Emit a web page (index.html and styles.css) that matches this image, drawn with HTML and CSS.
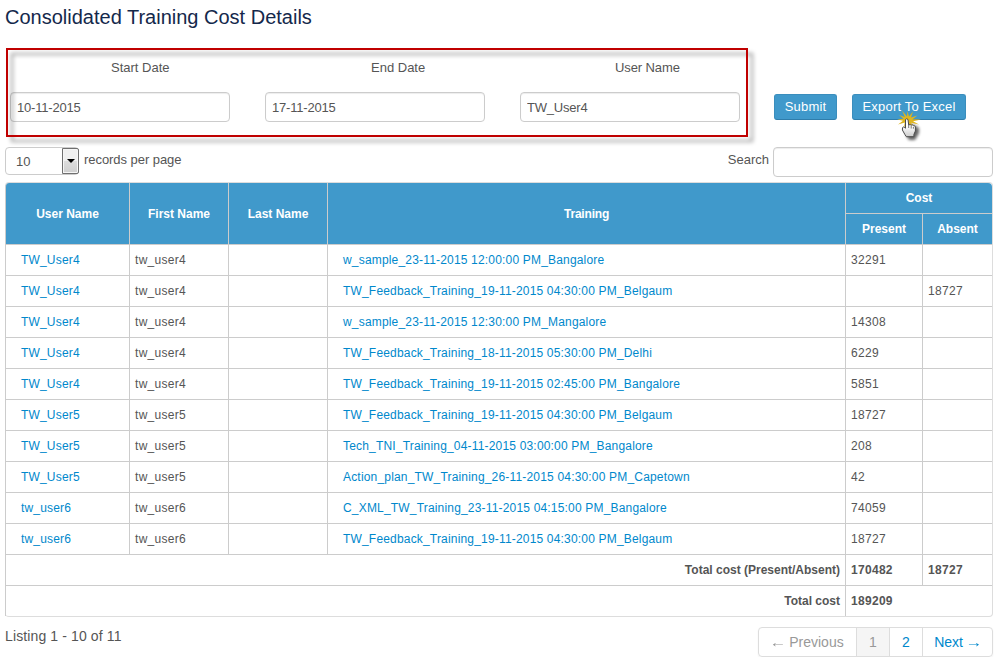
FILE: index.html
```
<!DOCTYPE html>
<html lang="en">
<head>
<meta charset="utf-8">
<title>Consolidated Training Cost Details</title>
<link rel="stylesheet" href="styles.css">
</head>
<body>
<main class="page">
  <h1 class="title">Consolidated Training Cost Details</h1>

  <form class="filters">
    <div class="fields">
      <div class="field"><label class="label start" for="start">Start Date</label><input class="input" id="start" value="10-11-2015"></div>
      <div class="field"><label class="label end" for="end">End Date</label><input class="input" id="end" value="17-11-2015"></div>
      <div class="field"><label class="label user" for="user">User Name</label><input class="input" id="user" value="TW_User4"></div>
      <div class="frame"></div>
    </div>
    <button class="btn submit" type="button">Submit</button>
    <button class="btn export" type="button">Export To Excel
      <svg class="cursor" viewBox="0 0 40 36" width="40" height="36">
        <defs>
          <linearGradient id="hand" x1="0" y1="0" x2="0" y2="1"><stop offset=".4" stop-color="#fff"/><stop offset="1" stop-color="#ccc"/></linearGradient>
          <filter id="soft" x="-50%" y="-50%" width="200%" height="200%"><feGaussianBlur stdDeviation="1.7"/></filter>
        </defs>
        <path d="M14 14l5 2 5 3v5l-4 7h-6l-3-5z" fill="#000" opacity=".6" filter="url(#soft)"/>
        <path d="M12 7.500L12.500 2 14 7.500 18 2.500 16 8.500 22.500 6.500 17.500 10.200 26 10.500 18 12.300 24 15.500 16 13.800 19 18.500 13 14 9 18 9.800 13.500 3 15.500 8 11.800 2 10.500 8.500 9.800 4 6 9.800 8 7 1.500z" fill="#dfb51f"/>
        <path d="M10.500 10.500q1.300-1.500 2.500 0l.7 5.500q1.300-1 2.500.2 1.200-.8 2.300.5 1.500-.4 1.900 1.200v4.100l-1.500 3.500v2.200h-7.500l-1.500-2.200-2.500-4.500q-.5-3.200 1.500-3.200l1.600 1.400z" fill="url(#hand)" stroke="#4a4a4a" stroke-width="1"/>
        <path d="M13.700 16v3M16.200 17v2.500M18.400 18v1.700" fill="none" stroke="#555" stroke-width=".8"/>
      </svg>
    </button>
  </form>

  <div class="tools">
    <div class="length">
      <div class="select"><span>10</span><span class="arrow"><svg width="8" height="4" viewBox="0 0 8 4"><path d="M0 0h8L4 4z"/></svg></span></div>
      <span class="per-page">records per page</span>
    </div>
    <label class="search"><span class="search-text">Search</span><input class="input"></label>
  </div>

  <table class="table">
    <colgroup><col class="c1"><col class="c2"><col class="c2"><col class="c4"><col class="c5"><col class="c6"></colgroup>
    <thead>
      <tr><th rowspan="2">User Name</th><th rowspan="2">First Name</th><th rowspan="2">Last Name</th><th class="training" rowspan="2">Training</th><th colspan="2">Cost</th></tr>
      <tr><th class="sub">Present</th><th class="sub">Absent</th></tr>
    </thead>
    <tbody>
      <tr><td><a>TW_User4</a></td><td>tw_user4</td><td></td><td><a>w_sample_23-11-2015 12:00:00 PM_Bangalore</a></td><td>32291</td><td></td></tr>
      <tr><td><a>TW_User4</a></td><td>tw_user4</td><td></td><td><a>TW_Feedback_Training_19-11-2015 04:30:00 PM_Belgaum</a></td><td></td><td>18727</td></tr>
      <tr><td><a>TW_User4</a></td><td>tw_user4</td><td></td><td><a>w_sample_23-11-2015 12:30:00 PM_Mangalore</a></td><td>14308</td><td></td></tr>
      <tr><td><a>TW_User4</a></td><td>tw_user4</td><td></td><td><a>TW_Feedback_Training_18-11-2015 05:30:00 PM_Delhi</a></td><td>6229</td><td></td></tr>
      <tr><td><a>TW_User4</a></td><td>tw_user4</td><td></td><td><a>TW_Feedback_Training_19-11-2015 02:45:00 PM_Bangalore</a></td><td>5851</td><td></td></tr>
      <tr><td><a>TW_User5</a></td><td>tw_user5</td><td></td><td><a>TW_Feedback_Training_19-11-2015 04:30:00 PM_Belgaum</a></td><td>18727</td><td></td></tr>
      <tr><td><a>TW_User5</a></td><td>tw_user5</td><td></td><td><a>Tech_TNI_Training_04-11-2015 03:00:00 PM_Bangalore</a></td><td>208</td><td></td></tr>
      <tr><td><a>TW_User5</a></td><td>tw_user5</td><td></td><td><a>Action_plan_TW_Training_26-11-2015 04:30:00 PM_Capetown</a></td><td>42</td><td></td></tr>
      <tr><td><a>tw_user6</a></td><td>tw_user6</td><td></td><td><a>C_XML_TW_Training_23-11-2015 04:15:00 PM_Bangalore</a></td><td>74059</td><td></td></tr>
      <tr><td><a>tw_user6</a></td><td>tw_user6</td><td></td><td><a>TW_Feedback_Training_19-11-2015 04:30:00 PM_Belgaum</a></td><td>18727</td><td></td></tr>
    </tbody>
    <tfoot>
      <tr><td class="total" colspan="4">Total cost (Present/Absent)</td><td>170482</td><td>18727</td></tr>
      <tr><td class="total" colspan="4">Total cost</td><td colspan="2">189209</td></tr>
    </tfoot>
  </table>

  <div class="footer">
    <div class="listing">Listing 1 - 10 of 11</div>
    <nav class="pager"><span class="prev"><span class="dir">←</span> Previous</span><span class="current">1</span><a class="two">2</a><a class="next">Next <span class="dir">→</span></a></nav>
  </div>
</main>
</body>
</html>
```
FILE: styles.css
```
* { box-sizing: border-box; }
body {
  margin: 0;
  background: #fff;
  color: #555;
  font: 13px/20px "Liberation Sans", Arial, sans-serif;
}
.page { width: 993px; padding-left: 5px; }
.title {
  margin: 0;
  height: 48px;
  padding-top: 7px;
  color: #14284b;
  font-size: 20px;
  font-weight: normal;
  line-height: 20px;
}
.filters { display: flex; height: 99px; }
.fields {
  position: relative;
  display: flex;
  gap: 35px;
  width: 743px;
  padding: 10px 0 0 5px;
}
.field { display: flex; flex-direction: column; width: 220px; }
.label { height: 34px; }
.start { padding-left: 101px; }
.end { padding-left: 106px; }
.user { padding-left: 95px; letter-spacing: -.1px; }
.input {
  width: 220px;
  height: 30px;
  margin: 0;
  padding: 4px 6px;
  border: 1px solid #ccc;
  border-radius: 4px;
  box-shadow: inset 0 1px 1px rgba(0, 0, 0, .075);
  background: #fff;
  color: #555;
  font: inherit;
  letter-spacing: -.2px;
}
.frame {
  position: absolute;
  left: 1px;
  top: 0;
  width: 742px;
  height: 89px;
  border: 2px solid #c00000;
  filter: drop-shadow(5px 5px 2px rgba(0, 0, 0, .4));
  pointer-events: none;
}
.btn {
  position: relative;
  height: 26px;
  margin-top: 46px;
  padding: 0;
  border: 1px solid #3b8ebd;
  border-bottom-color: #2f7dab;
  border-radius: 3px;
  background: #4099cb;
  color: #fff;
  font: 13px/22px "Liberation Sans", Arial, sans-serif;
  letter-spacing: .2px;
  white-space: nowrap;
}
.submit { width: 63px; margin-left: 26px; }
.export { width: 114px; margin-left: 15px; }
.cursor { position: absolute; left: 42px; top: 14px; }
.tools {
  display: flex;
  justify-content: space-between;
  height: 35px;
}
.length { display: flex; gap: 5px; }
.select {
  display: flex;
  justify-content: space-between;
  width: 74px;
  height: 28px;
  padding-left: 10px;
  border: 1px solid #ccc;
  border-radius: 4px;
  line-height: 27px;
}
.arrow {
  display: flex;
  align-items: center;
  justify-content: center;
  width: 17px;
  height: 26px;
  margin-right: -1px;
  border: 1px solid #707070;
  border-radius: 0 2px 2px 0;
  box-shadow: inset 0 0 0 1px #f6f6f6;
  background: linear-gradient(#f0f0f0 50%, #ddd 50%, #cfcfcf);
}
.per-page { padding-top: 3px; letter-spacing: -.05px; }
.search { display: flex; gap: 4px; }
.search-text { padding-top: 3px; }
.table {
  width: 988px;
  table-layout: fixed;
  border: 1px solid #ddd;
  border-left: 0;
  border-radius: 4px;
  border-collapse: separate;
  border-spacing: 0;
  font-size: 12px;
}
.c1 { width: 124px; }
.c2 { width: 99px; }
.c4 { width: 518px; }
.c5 { width: 77px; }
.c6 { width: 70px; }
.table th, .table td {
  height: 31px;
  padding: 0 5px;
  border-left: 1px solid #ccc;
  border-top: 1px solid #ccc;
  text-align: left;
  white-space: nowrap;
}
.table td { letter-spacing: .3px; }
.table th {
  background: #4099cb;
  color: #fff;
  text-align: center;
}
.table th.training { letter-spacing: -.2px; }
.table thead tr:first-child th { height: 30px; border-top: 0; }
.table th:first-child:not(.sub) { border-top-left-radius: 4px; }
.table thead tr:first-child th:last-child { border-top-right-radius: 4px; }
.table a { padding-left: 10px; color: #08c; letter-spacing: .18px; }
.table tfoot td { font-weight: bold; }
.table td.total { text-align: right; letter-spacing: 0; }
.footer {
  display: flex;
  justify-content: space-between;
  padding-top: 10px;
  font-size: 14px;
}
.listing { margin-top: -1px; letter-spacing: .12px; }
.pager {
  display: flex;
  height: 30px;
  border: 1px solid #ddd;
  border-radius: 4px;
  box-shadow: 0 1px 2px rgba(0, 0, 0, .05);
  line-height: 28px;
  text-align: center;
  color: #999;
  overflow: hidden;
}
.pager > * { border-left: 1px solid #ddd; }
.pager .prev { width: 97px; border-left: 0; }
.pager a { color: #08c; }
.current { width: 33px; background: #f5f5f5; }
.two { width: 33px; }
.next { width: 70px; }
.dir { display: inline-block; transform: scaleX(1.2); }
```
